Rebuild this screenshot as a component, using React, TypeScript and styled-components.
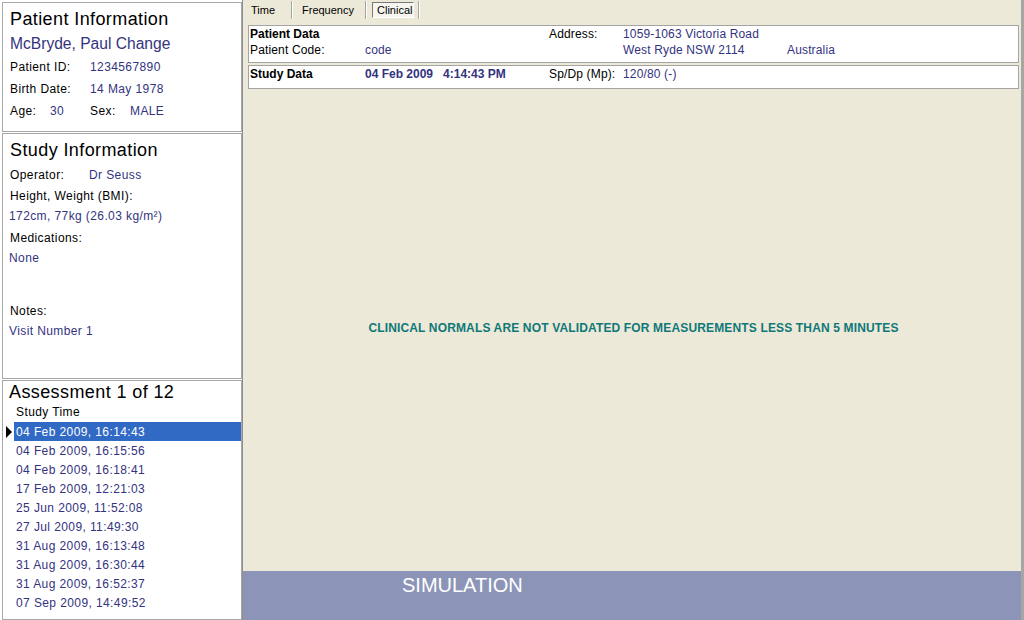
import React from "react";
import styled, { createGlobalStyle } from "styled-components";

const Global = createGlobalStyle`
  *, *::before, *::after { box-sizing: border-box; }
  html, body { margin: 0; padding: 0; background: #fff; }
  body {
    font-family: "Liberation Sans", Arial, sans-serif;
    font-size: 12px;
    color: #000;
  }
  #root { width: 1024px; height: 620px; overflow: hidden; }
`;

const NAVY = "#333380";

const Screen = styled.div`
  display: grid;
  grid-template-columns: 243px 781px;
  height: 620px;
`;

/* ---------- left column ---------- */

const LeftCol = styled.aside`
  display: flex;
  flex-direction: column;
  gap: 1px;
  padding: 2px 0 0 2px;
  background: #fff;
  border-right: 1px solid #8e8e8e;
  letter-spacing: 0.4px;
  min-height: 0;
`;

const Panel = styled.section<{ $h?: number; $pt: number }>`
  flex: ${(p) => (p.$h ? `0 0 ${p.$h}px` : "1 1 auto")};
  width: 240px;
  border: 1px solid #a8a8a8;
  background: #fff;
  padding-top: ${(p) => p.$pt}px;
  overflow: hidden;
`;

const PanelTitle = styled.h2<{ $lh: number; $pl: number }>`
  margin: 0;
  padding-left: ${(p) => p.$pl}px;
  font-size: 18px;
  font-weight: normal;
  line-height: ${(p) => p.$lh}px;
  letter-spacing: 0.4px;
  color: #000;
`;

const PatientName = styled.div`
  padding-left: 7px;
  font-size: 15.6px;
  line-height: 25px;
  letter-spacing: 0;
  color: ${NAVY};
`;

const FieldRow = styled.div<{ $cols: string; $lh: number; $mt?: number }>`
  display: grid;
  grid-template-columns: ${(p) => p.$cols};
  padding-left: 7px;
  line-height: ${(p) => p.$lh}px;
  margin-top: ${(p) => p.$mt ?? 0}px;
  white-space: nowrap;
`;

const Label = styled.span`
  color: #000;
`;

const Value = styled.span`
  color: ${NAVY};
`;

const Line = styled.div<{ $value?: boolean; $mt?: number }>`
  padding-left: ${(p) => (p.$value ? 6 : 7)}px;
  line-height: 20px;
  margin-top: ${(p) => p.$mt ?? 0}px;
  color: ${(p) => (p.$value ? NAVY : "#000")};
  white-space: nowrap;
`;

const ListHeader = styled.div`
  padding-left: 13px;
  line-height: 20px;
`;

const ListRow = styled.div`
  display: grid;
  grid-template-columns: 11px 1fr;
  height: 19px;
`;

const Gutter = styled.div`
  display: flex;
  align-items: center;
  padding-left: 3px;
`;

const RowCell = styled.div<{ $selected?: boolean }>`
  padding-left: 2px;
  line-height: 21px;
  height: 19px;
  background: ${(p) => (p.$selected ? "#316ac5" : "transparent")};
  color: ${(p) => (p.$selected ? "#fff" : NAVY)};
  white-space: nowrap;
`;

/* ---------- right area ---------- */

const RightArea = styled.main`
  display: flex;
  flex-direction: column;
  background: #ece9d8;
  border-right: 3px solid #a6a6a6;
  min-width: 0;
`;

const TabStrip = styled.nav`
  display: flex;
  align-items: flex-start;
  height: 20px;
  padding-top: 1px;
  font-size: 11px;
`;

const Tab = styled.div<{ $w: number; $pl: number }>`
  flex: none;
  width: ${(p) => p.$w}px;
  height: 18px;
  padding: 1px 0 0 ${(p) => p.$pl}px;
  line-height: 16px;
  border-right: 1px solid #a6a59c;
  box-shadow: 1px 0 0 #fff;
  color: #000;
`;

const ActiveTab = styled.span`
  display: block;
  width: 42px;
  height: 16px;
  padding-left: 4px;
  line-height: 14px;
  background: #f6f5ef;
  border: 1px solid;
  border-color: #7a7a7a #fff #fff #7a7a7a;
`;

const Body = styled.div`
  flex: 1 1 auto;
  display: flex;
  flex-direction: column;
  padding: 5px 2px 0 5px;
  letter-spacing: 0.15px;
  min-height: 0;
`;

const DataBox = styled.div<{ $pb: number; $mt?: number }>`
  display: grid;
  grid-template-columns: 115px 184px 74px 164px 1fr;
  padding: 0 0 ${(p) => p.$pb}px 1px;
  margin-top: ${(p) => p.$mt ?? 0}px;
  line-height: 16px;
  background: #fff;
  border: 1px solid #a4a4a4;
  white-space: nowrap;
`;

const BoxTitle = styled.span`
  font-weight: bold;
  letter-spacing: 0;
  color: #000;
`;

const StrongValue = styled.span`
  display: flex;
  gap: 10px;
  font-weight: bold;
  letter-spacing: 0;
  color: ${NAVY};
`;

const MessageArea = styled.div`
  flex: 1 1 auto;
  display: flex;
  align-items: center;
  justify-content: center;
  padding-bottom: 5px;
`;

const Message = styled.p`
  margin: 0;
  font-size: 12px;
  font-weight: bold;
  line-height: 14px;
  color: #0f7878;
  white-space: nowrap;
`;

const SimBar = styled.footer`
  flex: 0 0 49px;
  padding: 2px 0 0 159px;
  background: #8c95b8;
  color: #fff;
  font-size: 20px;
  line-height: 24px;
`;

const Marker = () => (
  <svg width="6" height="12" viewBox="0 0 6 12" aria-hidden="true">
    <polygon points="0,0 6,6 0,12" fill="#000" />
  </svg>
);

const studies = [
  "04 Feb 2009, 16:14:43",
  "04 Feb 2009, 16:15:56",
  "04 Feb 2009, 16:18:41",
  "17 Feb 2009, 12:21:03",
  "25 Jun 2009, 11:52:08",
  "27 Jul 2009, 11:49:30",
  "31 Aug 2009, 16:13:48",
  "31 Aug 2009, 16:30:44",
  "31 Aug 2009, 16:52:37",
  "07 Sep 2009, 14:49:52",
];

export default function App() {
  return (
    <>
      <Global />
      <Screen>
        <LeftCol>
          <Panel $h={130} $pt={5}>
            <PanelTitle $lh={23} $pl={7}>Patient Information</PanelTitle>
            <PatientName>McBryde, Paul Change</PatientName>
            <FieldRow $cols="80px 1fr" $lh={22}>
              <Label>Patient ID:</Label>
              <Value>1234567890</Value>
            </FieldRow>
            <FieldRow $cols="80px 1fr" $lh={22}>
              <Label>Birth Date:</Label>
              <Value>14 May 1978</Value>
            </FieldRow>
            <FieldRow $cols="40px 40px 40px 1fr" $lh={22}>
              <Label>Age:</Label>
              <Value>30</Value>
              <Label>Sex:</Label>
              <Value>MALE</Value>
            </FieldRow>
          </Panel>

          <Panel $h={246} $pt={5}>
            <PanelTitle $lh={23} $pl={7}>Study Information</PanelTitle>
            <FieldRow $cols="79px 1fr" $lh={20} $mt={3}>
              <Label>Operator:</Label>
              <Value>Dr Seuss</Value>
            </FieldRow>
            <Line $mt={1}>Height, Weight (BMI):</Line>
            <Line $value>172cm, 77kg (26.03 kg/m²)</Line>
            <Line $mt={2}>Medications:</Line>
            <Line $value>None</Line>
            <Line $mt={33}>Notes:</Line>
            <Line $value>Visit Number 1</Line>
          </Panel>

          <Panel $pt={1}>
            <PanelTitle $lh={20} $pl={6}>Assessment 1 of 12</PanelTitle>
            <ListHeader>Study Time</ListHeader>
            {studies.map((s, i) => (
              <ListRow key={s}>
                <Gutter>{i === 0 && <Marker />}</Gutter>
                <RowCell $selected={i === 0}>{s}</RowCell>
              </ListRow>
            ))}
          </Panel>
        </LeftCol>

        <RightArea>
          <TabStrip>
            <Tab $w={49} $pl={8}>Time</Tab>
            <Tab $w={74} $pl={10}>Frequency</Tab>
            <Tab $w={53} $pl={6}>
              <ActiveTab>Clinical</ActiveTab>
            </Tab>
          </TabStrip>

          <Body>
            <DataBox $pb={4}>
              <BoxTitle>Patient Data</BoxTitle>
              <span />
              <Label>Address:</Label>
              <Value>1059-1063 Victoria Road</Value>
              <span />
              <Label>Patient Code:</Label>
              <Value>code</Value>
              <span />
              <Value>West Ryde NSW 2114</Value>
              <Value>Australia</Value>
            </DataBox>
            <DataBox $pb={6} $mt={2}>
              <BoxTitle>Study Data</BoxTitle>
              <StrongValue>
                <span>04 Feb 2009</span>
                <span>4:14:43 PM</span>
              </StrongValue>
              <Label>Sp/Dp (Mp):</Label>
              <Value>120/80 (-)</Value>
              <span />
            </DataBox>
            <MessageArea>
              <Message>
                CLINICAL NORMALS ARE NOT VALIDATED FOR MEASUREMENTS LESS THAN 5 MINUTES
              </Message>
            </MessageArea>
          </Body>

          <SimBar>SIMULATION</SimBar>
        </RightArea>
      </Screen>
    </>
  );
}
